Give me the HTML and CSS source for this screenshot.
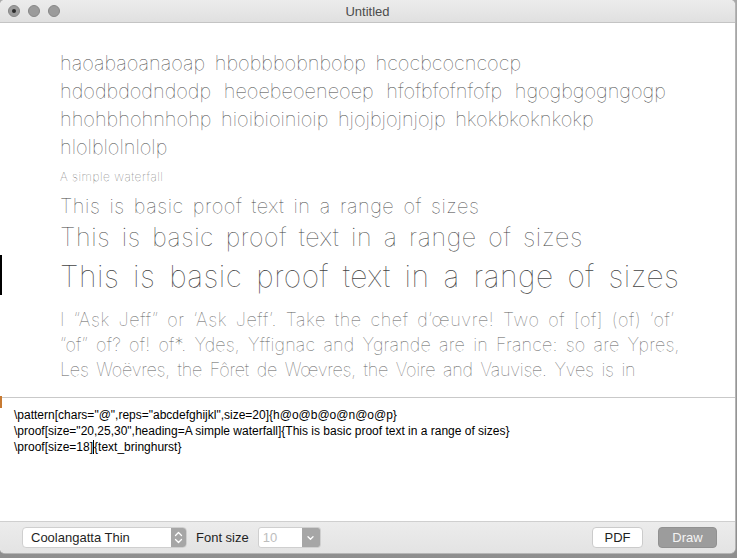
FILE: index.html
```html
<!DOCTYPE html>
<html>
<head>
<meta charset="utf-8">
<link rel="stylesheet" href="styles.css">
</head>
<body>
<div class="desk">
  <div class="edge edge-dark"></div>
  <div class="edge edge-orange"></div>
  <div class="window">
    <div class="titlebar">
      <div class="lights">
        <span class="light"><span class="dot"></span></span>
        <span class="light"></span>
        <span class="light"></span>
      </div>
      <div class="title">Untitled</div>
      <div></div>
    </div>
    <div class="canvas">
      <div class="pattern">
        <div class="line">haoabaoanaoap hbobbbobnbobp hcocbcocncocp</div>
        <div class="line line-wide">hdodbdodndodp heoebeoeneoep hfofbfofnfofp hgogbgogngogp</div>
        <div class="line">hhohbhohnhohp hioibioinioip hjojbjojnjojp hkokbkoknkokp</div>
        <div class="line">hlolblolnlolp</div>
      </div>
      <div class="waterfall">
        <div class="heading">A simple waterfall</div>
        <div class="wf wf20">This is basic proof text in a range of sizes</div>
        <div class="wf wf25">This is basic proof text in a range of sizes</div>
        <div class="wf wf30">This is basic proof text in a range of sizes</div>
      </div>
      <div class="body-text">
        <div class="line line-1">I “Ask Jeff” or ‘Ask Jeff’. Take the chef d’œuvre! Two of [of] (of) ‘of’</div>
        <div class="line line-2">“of” of? of! of*. Ydes, Yffignac and Ygrande are in France: so are Ypres,</div>
        <div class="line line-3">Les Woëvres, the Fôret de Wœvres, the Voire and Vauvise. Yves is in</div>
      </div>
    </div>
    <div class="editor">
      <div class="code">\pattern[chars="@",reps="abcdefghijkl",size=20]{h@o@b@o@n@o@p}</div>
      <div class="code">\proof[size="20,25,30",heading=A simple waterfall]{This is basic proof text in a range of sizes}</div>
      <div class="code">\proof[size=18]<span class="caret"></span>{text_bringhurst}</div>
    </div>
    <div class="toolbar">
      <div class="popup">
        <span class="popup-label">Coolangatta Thin</span>
        <span class="stepper">
          <svg width="9" height="13" viewBox="0 0 9 13"><path d="M1.5 4.5 L4.5 1.5 L7.5 4.5 M1.5 8.5 L4.5 11.5 L7.5 8.5" fill="none" stroke="#fff" stroke-width="1.3" stroke-linecap="round" stroke-linejoin="round"/></svg>
        </span>
      </div>
      <span class="label">Font size</span>
      <div class="combo">
        <span class="combo-field">10</span>
        <span class="combo-arrow">
          <svg width="9" height="6" viewBox="0 0 9 6"><path d="M2 1.8 L4.5 4.2 L7 1.8" fill="none" stroke="#fff" stroke-width="1.3" stroke-linecap="round" stroke-linejoin="round"/></svg>
        </span>
      </div>
      <div class="spacer"></div>
      <button class="btn btn-pdf">PDF</button>
      <button class="btn btn-draw">Draw</button>
    </div>
  </div>
</div>
</body>
</html>
```
FILE: styles.css
```css
html, body {
  margin: 0;
  padding: 0;
}
body {
  width: 737px;
  height: 558px;
  overflow: hidden;
  background: linear-gradient(#a8a8a8, #8e8e8e);
  font-family: "Liberation Sans", Arial, sans-serif;
}
.desk {
  position: relative;
  width: 737px;
  height: 558px;
}
.edge {
  position: absolute;
  left: 0;
  width: 2px;
  z-index: 2;
}
.edge-dark {
  top: 255px;
  height: 40px;
  background: #000;
}
.edge-orange {
  top: 396px;
  height: 12px;
  background: #c77a32;
}
.window {
  width: 735px;
  height: 553px;
  background: #fff;
  border-radius: 5px;
  overflow: hidden;
  display: flex;
  flex-direction: column;
  box-shadow: 0 0 0 1px #b5b5b5;
}
.titlebar {
  height: 22px;
  flex: none;
  display: grid;
  grid-template-columns: 1fr auto 1fr;
  align-items: center;
  background: linear-gradient(#ececec, #e0e0e0);
  border-bottom: 1px solid #c4c4c4;
}
.lights {
  display: flex;
  gap: 8px;
  padding-left: 8px;
}
.light {
  width: 12px;
  height: 12px;
  box-sizing: border-box;
  border-radius: 50%;
  background: #9b9b9b;
  border: 1px solid #878787;
  display: flex;
  align-items: center;
  justify-content: center;
}
.dot {
  width: 4px;
  height: 4px;
  border-radius: 50%;
  background: #2b2b2b;
}
.title {
  font-size: 13px;
  color: #4c4c4c;
}
.canvas {
  height: 375px;
  flex: none;
  padding: 26px 0 0 60px;
  box-sizing: border-box;
  border-bottom: 1px solid #c9c9c9;
  font-family: "Inter", "Lato", sans-serif;
  font-weight: 100;
  color: #444;
  white-space: nowrap;
  overflow: hidden;
}
.pattern .line {
  font-size: 20px;
  line-height: 28px;
  letter-spacing: 0;
  word-spacing: 4px;
}
.pattern .line-wide {
  word-spacing: 7px;
}
.heading {
  font-size: 12px;
  line-height: 16px;
  margin: 8px 0 7px;
  color: #555;
  letter-spacing: 0.5px;
}
.wf {
  line-height: 1.4;
}
.wf20 { font-size: 20px; letter-spacing: 0.53px; word-spacing: 3px; }
.wf25 { font-size: 25px; letter-spacing: 0.58px; word-spacing: 4px; }
.wf30 { font-size: 30px; letter-spacing: 0.47px; word-spacing: 5px; }
.body-text {
  margin-top: 10px;
}
.body-text .line {
  font-size: 18px;
  line-height: 25px;
  word-spacing: 3px;
  color: #5e5e5e;
}
.body-text .line-1 { letter-spacing: 0.62px; }
.body-text .line-2 { letter-spacing: 0.16px; }
.body-text .line-3 { letter-spacing: -0.26px; }
.editor {
  flex: 1;
  padding: 9px 0 0 14px;
  font-size: 12px;
  line-height: 16px;
  color: #000;
}
.code {
  white-space: nowrap;
}
.caret {
  display: inline-block;
  width: 1px;
  height: 14px;
  background: #000;
  vertical-align: -3px;
}
.toolbar {
  height: 32px;
  flex: none;
  box-sizing: border-box;
  border-top: 1px solid #cfcfcf;
  background: linear-gradient(#ececec, #e3e3e3);
  display: flex;
  align-items: center;
  padding: 0 18px 0 22px;
  font-size: 13px;
  color: #1f1f1f;
}
.popup {
  width: 165px;
  height: 21px;
  box-sizing: border-box;
  display: flex;
  align-items: stretch;
  background: #fff;
  border: 1px solid #cfcfcf;
  border-radius: 4px;
  overflow: hidden;
}
.popup-label {
  flex: 1;
  padding-left: 8px;
  line-height: 19px;
}
.stepper {
  width: 15px;
  background: #a6a6a6;
  display: flex;
  align-items: center;
  justify-content: center;
}
.label {
  margin-left: 9px;
}
.combo {
  margin-left: 9px;
  width: 63px;
  height: 21px;
  box-sizing: border-box;
  display: flex;
  border: 1px solid #cfcfcf;
  border-radius: 3px;
  overflow: hidden;
  background: #fff;
}
.combo-field {
  flex: 1;
  padding-left: 4px;
  line-height: 19px;
  color: #bdbdbd;
}
.combo-arrow {
  width: 18px;
  background: #a6a6a6;
  display: flex;
  align-items: center;
  justify-content: center;
}
.spacer {
  flex: 1;
}
.btn {
  height: 21px;
  box-sizing: border-box;
  border-radius: 4px;
  font-family: "Liberation Sans", Arial, sans-serif;
  font-size: 13px;
  padding: 0;
}
.btn-pdf {
  width: 51px;
  background: #fff;
  border: 1px solid #cbcbcb;
  color: #1f1f1f;
}
.btn-draw {
  width: 59px;
  margin-left: 15px;
  background: #9c9c9c;
  border: 1px solid #919191;
  color: #f4f4f4;
}
```
